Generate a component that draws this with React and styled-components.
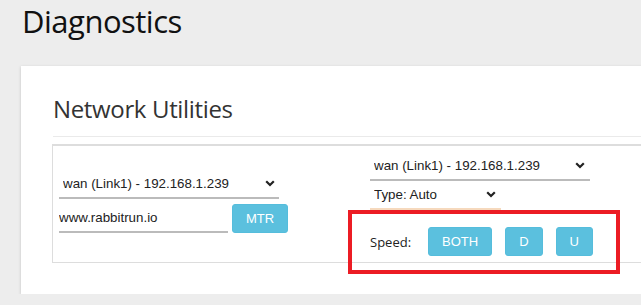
import React from 'react'
import styled, { createGlobalStyle } from 'styled-components';

const GlobalStyle = createGlobalStyle`
body {
  margin: 0;
  background: #ededed;
  overflow: hidden;
  font-family: "Open Sans", "Noto Sans", sans-serif;
}
`

const Chevron = () => (
  <ChevronIcon width="10" height="7" viewBox="0 0 10 7">
    <path d="M1.2 1.2 L5 5 L8.8 1.2" fill="none" stroke="#222" strokeWidth="2.2" />
  </ChevronIcon>
);

const Dropdown = ({ width, accent, height, options, right }) => (
  <SelectWrap width={width} accent={accent} height={height} right={right}>
    <Select defaultValue={options[0]}>
      {options.map(o => <option key={o}>{o}</option>)}
    </Select>
    <Chevron />
  </SelectWrap>
);

const App = () => {
  return (
    <>
      <GlobalStyle />
      <Header>
        <Title>Diagnostics</Title>
      </Header>
      <Card>
        <CardTitle>Network Utilities</CardTitle>
        <Divider />
        <ToolBox>
          <LeftCol>
            <Dropdown width={220} height={30} right={4} options={['wan (Link1) - 192.168.1.239']} />
            <InputRow>
              <HostInput defaultValue="www.rabbitrun.io" />
              <Button>MTR</Button>
            </InputRow>
          </LeftCol>
          <RightCol>
            <Dropdown width={220} height={30} right={5} options={['wan (Link1) - 192.168.1.239']} />
            <Dropdown width={131} height={29} right={5} accent options={['Type: Auto']} />
            <SpeedRow>
              <SpeedLabel>Speed:</SpeedLabel>
              <Button>BOTH</Button>
              <Button>D</Button>
              <Button>U</Button>
              <Highlight />
            </SpeedRow>
          </RightCol>
        </ToolBox>
      </Card>
    </>
  );
};

export default App;

const Header = styled.div`
height: 66px;
padding-left: 22px;
`
const Title = styled.h1`
margin: 0;
font-size: 31px;
line-height: 42px;
font-weight: 400;
letter-spacing: -0.5px;
color: #111;
`
const Card = styled.div`
margin-left: 21px;
width: 720px;
height: 228px;
box-sizing: border-box;
background: #fff;
padding: 26px 0 0 31px;
box-shadow: 0 1px 3px rgba(0,0,0,0.18);
`
const CardTitle = styled.h2`
margin: 0 0 11px 1px;
font-size: 24px;
line-height: 33px;
font-weight: 400;
letter-spacing: -0.35px;
color: #333;
`
const Divider = styled.div`
height: 1px;
background: #eaeaea;
margin: 0 0 7px 1px;
`
const ToolBox = styled.div`
display: grid;
grid-template-columns: 317px 1fr;
border: 1px solid #ddd;
border-top: 2px solid #ddd;
`
const LeftCol = styled.div`
display: flex;
flex-direction: column;
gap: 5px;
padding: 23px 0 0 6px;
`
const RightCol = styled.div`
display: flex;
flex-direction: column;
align-items: flex-start;
padding: 5px 0 6px;
`
const SelectWrap = styled.div`
display: flex;
align-items: center;
width: ${p => p.width}px;
height: ${p => p.height}px;
box-sizing: border-box;
border-bottom: 2px solid ${p => p.accent ? '#f6d9bd' : '#bbb'};
padding-right: ${p => p.right}px;
`
const Select = styled.select`
flex: 1;
appearance: none;
border: none;
outline: none;
background: transparent;
padding: 0 0 0 4px;
margin: 0;
font-family: "Liberation Sans", Arial, sans-serif;
font-size: 13.33px;
color: #222;
`
const ChevronIcon = styled.svg`
display: block;
pointer-events: none;
`
const InputRow = styled.div`
display: flex;
gap: 4px;
height: 29px;
`
const HostInput = styled.input`
width: 169px;
box-sizing: border-box;
border: none;
border-bottom: 2px solid #bbb;
outline: none;
padding: 0;
font-family: "Liberation Sans", Arial, sans-serif;
font-size: 13.33px;
color: #222;
background: transparent;
`
const Button = styled.button`
height: 29px;
padding: 0 13px;
border: 1px solid #55bddc;
border-radius: 3px;
background: #5bc0de;
color: #fff;
font-family: "Liberation Sans", Arial, sans-serif;
font-size: 13px;
cursor: pointer;
`
const SpeedRow = styled.div`
position: relative;
display: flex;
align-items: center;
gap: 13px;
margin-top: 17px;
`
const SpeedLabel = styled.span`
font-size: 13px;
color: #222;
margin-right: 4px;
`
const Highlight = styled.span`
position: absolute;
top: -17px;
left: -22px;
right: -27px;
bottom: -18px;
border: 4px solid #ec1c24;
pointer-events: none;
`
